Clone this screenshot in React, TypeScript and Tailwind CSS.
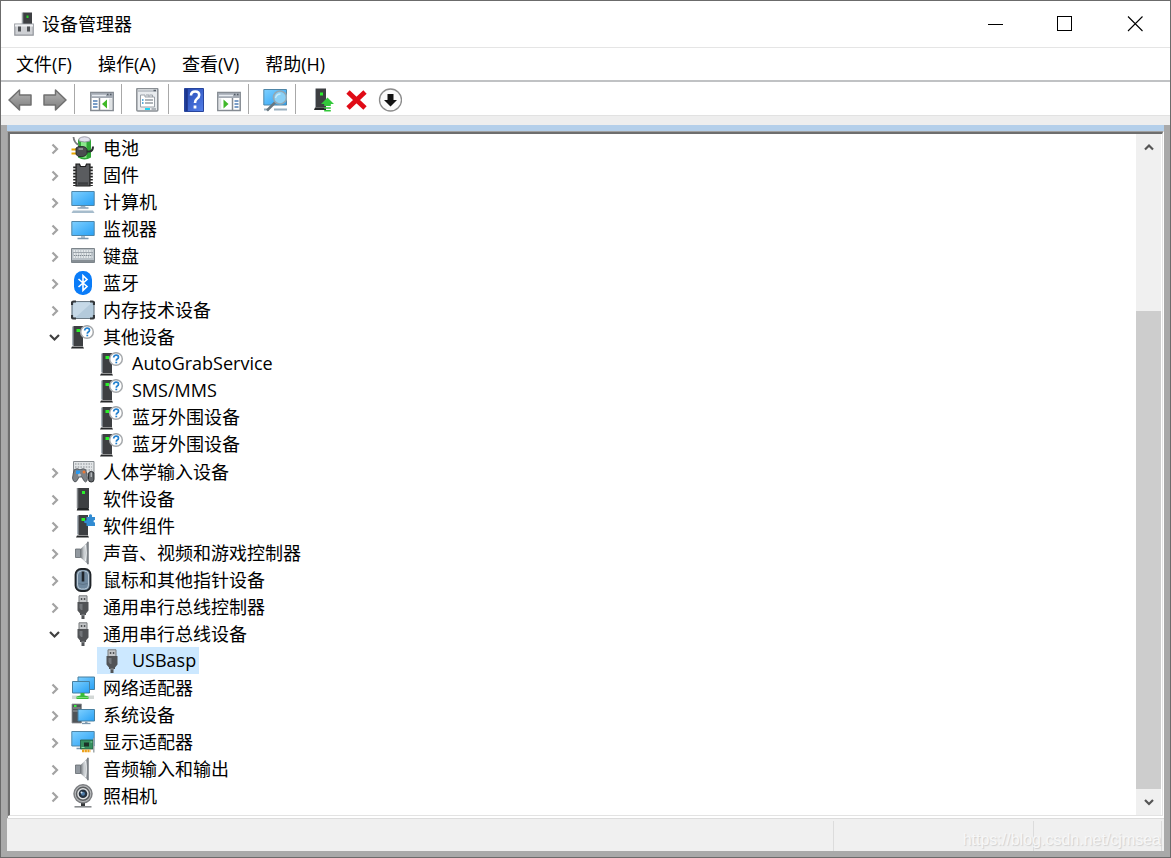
import { useState, type ReactNode } from 'react';
import clsx from 'clsx';

type IconName =
  | 'battery'
  | 'firmware'
  | 'computer'
  | 'monitor'
  | 'keyboard'
  | 'bluetooth'
  | 'memory'
  | 'unknown'
  | 'hid'
  | 'software'
  | 'component'
  | 'speaker'
  | 'mouse'
  | 'usb'
  | 'network'
  | 'system'
  | 'display'
  | 'camera';

interface DeviceNode {
  name: string;
  icon: IconName;
  open?: boolean;
  devices?: string[];
}

const nodes: DeviceNode[] = [
  { name: '电池', icon: 'battery' },
  { name: '固件', icon: 'firmware' },
  { name: '计算机', icon: 'computer' },
  { name: '监视器', icon: 'monitor' },
  { name: '键盘', icon: 'keyboard' },
  { name: '蓝牙', icon: 'bluetooth' },
  { name: '内存技术设备', icon: 'memory' },
  {
    name: '其他设备',
    icon: 'unknown',
    open: true,
    devices: ['AutoGrabService', 'SMS/MMS', '蓝牙外围设备', '蓝牙外围设备'],
  },
  { name: '人体学输入设备', icon: 'hid' },
  { name: '软件设备', icon: 'software' },
  { name: '软件组件', icon: 'component' },
  { name: '声音、视频和游戏控制器', icon: 'speaker' },
  { name: '鼠标和其他指针设备', icon: 'mouse' },
  { name: '通用串行总线控制器', icon: 'usb' },
  { name: '通用串行总线设备', icon: 'usb', open: true, devices: ['USBasp'] },
  { name: '网络适配器', icon: 'network' },
  { name: '系统设备', icon: 'system' },
  { name: '显示适配器', icon: 'display' },
  { name: '音频输入和输出', icon: 'speaker' },
  { name: '照相机', icon: 'camera' },
];

function Svg({ children }: { children: ReactNode }) {
  return (
    <svg viewBox="0 0 24 24" className="size-6 shrink-0" aria-hidden="true">
      <defs>
        <linearGradient id="screen" x1="0" y1="0" x2="1" y2="1">
          <stop offset="0" stopColor="#7fd0ff" />
          <stop offset="1" stopColor="#27a0f5" />
        </linearGradient>
        <linearGradient id="steel" x1="0" y1="0" x2="1" y2="0">
          <stop offset="0" stopColor="#6d7277" />
          <stop offset="0.5" stopColor="#d3d7da" />
          <stop offset="1" stopColor="#7b8085" />
        </linearGradient>
        <linearGradient id="arrow" x1="0" y1="0" x2="0" y2="1">
          <stop offset="0" stopColor="#b5b5b5" />
          <stop offset="1" stopColor="#7d7d7d" />
        </linearGradient>
        <linearGradient id="help" x1="0" y1="0" x2="1" y2="1">
          <stop offset="0" stopColor="#2447b0" />
          <stop offset="1" stopColor="#5480ea" />
        </linearGradient>
      </defs>
      {children}
    </svg>
  );
}

function Tower({ x }: { x: number }) {
  return (
    <g transform={`translate(${x} 0)`}>
      <path d="M1 1.500h2v19H1z" fill="#a9b2ba" />
      <path d="M2.500 1H12v20H2.500z" fill="#3d3f42" />
      <path d="M5.500 4H9v3H5.500z" fill="#2bf02b" />
      <path d="M1 21.500h11l1 2H0z" fill="#26282a" />
    </g>
  );
}

const drawings: Record<IconName, ReactNode> = {
  battery: (
    <>
      <path d="M7 3.500h13V21.500q-6.500 4-13 0z" fill="#2fa636" />
      <path d="M10 5h5.500v17q-3 0-5.500-1z" fill="#8ae88b" />
      <path d="M8 2.500q5.500-3.500 11 0v2.500q-5 2-11 0z" fill="#e2e2ee" stroke="#8a8a98" strokeWidth="0.800" />
      <path d="M2.500 1Q3 7 8 9" fill="none" stroke="#77797c" strokeWidth="1.800" />
      <path d="M.5 13.500H6M.5 17.500H6" stroke="#e9a800" strokeWidth="1.800" />
      <path d="M5 12l2.500-1.500H12q3 0 4 3v4q-1.500 3-4 3H7.500L5 18.500z" fill="#4b4d50" stroke="#202224" strokeWidth="0.800" />
      <path d="M7.500 13H12" stroke="#a6a8ab" strokeWidth="1.400" />
      <path d="M16 15.500h2.500q3.500-.5 3.500-5" fill="none" stroke="#2b2d30" strokeWidth="2" />
    </>
  ),
  firmware: (
    <>
      <path d="M3.500 3.500v19.500M20.500 3.500v19.500" stroke="#222" strokeWidth="2.600" strokeDasharray="1.700 1.400" />
      <path d="M5 1h3.500l1 2.500h5l1-2.500H19v22H5z" fill="#5a5c5f" stroke="#1c1c1c" strokeWidth="1.200" />
      <path d="M7 20.500h10" stroke="#3c3e40" strokeWidth="2.500" />
    </>
  ),
  computer: (
    <>
      <path d="M.8 1.500h22.400v14H.8z" fill="url(#screen)" stroke="#4f86a8" />
      <path d="M10 16h4l1 1.500H9z" fill="#9fb1c0" />
      <path d="M6.500 18h11" stroke="#7b97ad" strokeWidth="1.300" />
      <path d="M2 20.500h20l1.500 2.500H.5z" fill="#a6bccc" />
    </>
  ),
  monitor: (
    <>
      <path d="M.8 4.500h22.400v14H.8z" fill="url(#screen)" stroke="#4f86a8" />
      <path d="M10 19h4v2h-4z" fill="#b1c0cb" />
      <path d="M6.500 21.500h11" stroke="#7b97ad" strokeWidth="1.500" />
    </>
  ),
  keyboard: (
    <>
      <path d="M.5 4.500h23v14H.5z" fill="#b9c1c7" stroke="#7d858b" />
      <path d="M1 17h22" stroke="#868e94" strokeWidth="2" />
      <path d="M2.500 7h19M3 10h18M2.500 13h19" stroke="#f4f7f8" strokeWidth="1.700" strokeDasharray="1.600 1" />
      <path d="M2.500 8.500h19M3 11.500h18" stroke="#727c83" strokeWidth="0.800" strokeDasharray="1 1" />
    </>
  ),
  bluetooth: (
    <>
      <rect x="3" y="0" width="18" height="24" rx="8.500" fill="#0a7cf8" />
      <path d="M7.500 8l8.500 7.500-4 3.800V4.700l4 3.800L7.500 16" fill="none" stroke="#fff" strokeWidth="1.600" />
    </>
  ),
  memory: (
    <>
      <rect x="1" y="3.500" width="22" height="17" rx="2" fill="#b3cadb" stroke="#6d7c87" strokeWidth="1.200" />
      <path d="M3 4.500h18L5 19H2V6z" fill="#c6d9e7" />
      <path d="M1 7V5q0-1.500 1.500-1.500h2.500M19 3.500h2.500Q23 3.500 23 5v2M1 17v2q0 1.500 1.500 1.500h2.500M19 20.500h2.500q1.500 0 1.500-1.500v-2" fill="none" stroke="#34383b" strokeWidth="2.200" />
    </>
  ),
  unknown: (
    <>
      <Tower x={0} />
      <circle cx="16" cy="7" r="6.300" fill="#fff" stroke="#a6a9ac" strokeWidth="1.500" />
      <path d="M13.700 5.500q0-2.300 2.500-2.300 2.300 0 2.300 2 0 1.200-1.200 1.800-1 .7-1 1.700" fill="none" stroke="#2280cf" strokeWidth="1.700" />
      <path d="M15.400 9.700h1.800v1.600h-1.800z" fill="#2280cf" />
    </>
  ),
  hid: (
    <>
      <path d="M2.500 1.500h20.500V14H2.500z" fill="#e2e5e7" stroke="#878c90" />
      <path d="M4 4h17M4 7h17M4 10h17" stroke="#858b90" strokeWidth="1.200" strokeDasharray="1.500 1.200" />
      <path d="M3.500 9.500q3-1.500 5 0h1q3-1.500 5 0 2 5 2 9-.2 3-2 3.500-1.800-.5-3.500-5h-3q-2 5-4 5-2-.5-2.500-4 .5-5 2-8.500z" fill="#7d8287" stroke="#44484c" strokeWidth="0.800" />
      <path d="M5 10.500h4v3.500H5z" fill="#2998ef" />
      <circle cx="13" cy="12" r="1.500" fill="#ee7732" />
      <circle cx="8.500" cy="15" r="1.500" fill="#c1c5c8" />
      <rect x="17.500" y="11.500" width="5.500" height="10.500" rx="2.600" fill="#64686c" stroke="#2d3033" />
      <path d="M20.200 12.500v4.500" stroke="#d4d8db" />
    </>
  ),
  software: (
    <>
      <path d="M6.500 1H18v20H6.500z" fill="#3d3f42" />
      <path d="M6.500 1v20" stroke="#85898d" strokeWidth="1.500" />
      <path d="M11 4h3v3h-3z" fill="#2bf02b" />
      <path d="M6.500 21h11l.8 2.500H5.700z" fill="#222426" />
    </>
  ),
  component: (
    <>
      <Tower x={5} />
      <path d="M15.500 3h2.500Q17.500.2 19.500.2T21 3h3v3q-1.500 0-1.500 1.200T24 8.500V12h-8.500V9.200q-2.500 0-2.500-1.500t2.500-1.500z" fill="#318bd2" />
    </>
  ),
  speaker: (
    <>
      <path d="M4.500 8h5v8.500h-5z" fill="#9299a0" stroke="#62686d" strokeWidth="0.800" />
      <path d="M9.500 8L17 .8v22.400l-7.500-6.700z" fill="url(#steel)" />
      <path d="M16 .8h1.800v22.400H16z" fill="#7c8186" />
      <path d="M14.500 4q1.500 8 0 16" fill="none" stroke="#eceff1" strokeWidth="1.200" />
    </>
  ),
  mouse: (
    <>
      <rect x="4.500" y="1" width="15" height="22" rx="5.500" fill="#6f889e" stroke="#202428" strokeWidth="1.800" />
      <rect x="6.500" y="3" width="11" height="18" rx="4" fill="none" stroke="#b9c8d5" />
      <path d="M12 3.500v10" stroke="#1f252b" strokeWidth="2.600" />
      <path d="M7.500 15.500q4.500 2 9 0" fill="none" stroke="#5d7387" />
    </>
  ),
  usb: (
    <>
      <path d="M8 .8h8v7H8z" fill="#c4c6c8" stroke="#777a7d" />
      <path d="M9.800 3h1.500v2H9.800zM12.800 3h1.500v2h-1.500z" fill="#505356" />
      <path d="M6.500 7h11v8.500L15 18.500V20h-1.500v4h-3v-4H9v-1.500l-2.500-3z" fill="#515356" />
      <path d="M8.500 9h3v6h-1.500l-1.500-2z" fill="#73767a" />
      <path d="M10.500 20h3" stroke="#939699" />
    </>
  ),
  network: (
    <>
      <path d="M7 1h16.500v12.500H7z" fill="url(#screen)" stroke="#477f9f" />
      <path d="M1.500 5.500h17V17h-17z" fill="url(#screen)" stroke="#477f9f" />
      <path d="M1 19.500h22V23H1z" fill="#d3d8d6" />
      <path d="M9.500 17h4v2.500l4 1V23h-12v-2.500l4-1z" fill="#38bb38" />
      <path d="M6 21.500h11" stroke="#79dc75" />
    </>
  ),
  system: (
    <>
      <path d="M1 1h9.500v19H1z" fill="#505458" stroke="#929699" strokeWidth="0.800" />
      <path d="M2 5h7.500M2 8h7.500" stroke="#9ca0a4" />
      <path d="M3 2h2.500v2H3z" fill="#37ef41" />
      <path d="M7 6.500h16.500v11.500H7z" fill="url(#screen)" stroke="#477f9f" />
      <path d="M14 18.500h2.500v1.500H14z" fill="#91a4b3" />
      <path d="M11 20.500h8.500" stroke="#7b97ad" strokeWidth="1.300" />
    </>
  ),
  display: (
    <>
      <path d="M.8 1.500h22.400v14.500H.8z" fill="url(#screen)" stroke="#4f86a8" />
      <path d="M5.500 18.500h5" stroke="#7b97ad" strokeWidth="1.500" />
      <path d="M9.500 10h12.500v9H9.500z" fill="#35905f" stroke="#22583e" strokeWidth="0.800" />
      <path d="M13 12.500h5v4h-5z" fill="#1c3328" />
      <path d="M10.500 17.500h3M19.500 12h1.800" stroke="#8ad6a5" />
      <path d="M11 20.800h8.500" stroke="#eda21c" strokeWidth="2.800" strokeDasharray="2.200 .5" />
      <path d="M22.800 8v14.500" stroke="#9aa2a6" strokeWidth="1.400" />
    </>
  ),
  camera: (
    <>
      <path d="M10 19h4v3h-4z" fill="#37393b" />
      <path d="M3.500 22.800h17" stroke="#898c8f" strokeWidth="1.600" />
      <circle cx="12" cy="9.800" r="9" fill="#b9bbbd" stroke="#7b7d80" strokeWidth="1.500" />
      <circle cx="12" cy="9.800" r="6.500" fill="#e3e4e5" stroke="#5b5e61" strokeWidth="1.500" />
      <circle cx="12" cy="9.800" r="4.300" fill="#25313f" />
      <circle cx="12" cy="9.800" r="2" fill="#4d7ba8" />
      <circle cx="10.500" cy="8.500" r="1" fill="#d9e9f5" />
    </>
  ),
};

function Chevron({ open }: { open: boolean }) {
  return (
    <svg viewBox="0 0 16 16" className="size-4" fill="none" aria-hidden="true">
      {open ? (
        <path d="M3 6l4.500 4.500L12 6" stroke="#404040" strokeWidth="2.200" />
      ) : (
        <path d="M5.500 4.500L10 9l-4.500 4.500" stroke="#a3a3a3" strokeWidth="2.200" />
      )}
    </svg>
  );
}

function ScrollArrow({ down }: { down?: boolean }) {
  return (
    <svg viewBox="0 0 16 16" className="size-4" fill="none" aria-hidden="true">
      <path d={down ? 'M4 6l4 4 4-4' : 'M4 10.500l4-4 4 4'} stroke="#555" strokeWidth="2.200" />
    </svg>
  );
}

const tools: { className: string; items: { label: string; art: ReactNode }[] }[] = [
  {
    className: 'pl-[7px] pr-[7px] gap-[11px]',
    items: [
      {
        label: '后退',
        art: <path d="M1 12L11.500 2v5H23v10H11.500v5z" fill="url(#arrow)" stroke="#707070" strokeWidth="1.500" strokeLinejoin="round" />,
      },
      {
        label: '前进',
        art: <path d="M23 12L12.500 2v5H1v10h11.500v5z" fill="url(#arrow)" stroke="#707070" strokeWidth="1.500" strokeLinejoin="round" />,
      },
    ],
  },
  {
    className: 'pl-[15px] pr-[7px]',
    items: [
      {
        label: '显示/隐藏控制台树',
        art: (
          <>
            <path d="M.8 4.500h22.400v18H.8z" fill="#fff" stroke="#858b92" strokeWidth="1.500" />
            <path d="M1 5h22v5H1z" fill="#a4abb4" />
            <path d="M2 7.500h14" stroke="#e6ebf0" strokeWidth="1.500" />
            <path d="M17 6.500h1.500M20 6.500h1.500" stroke="#515a64" strokeWidth="1.500" />
            <path d="M9.500 10v12" stroke="#858b92" strokeWidth="1.500" />
            <path d="M3 13h4.500M3 16h4.500M3 19h4.500" stroke="#4f7eb5" strokeWidth="1.400" />
            <path d="M17 11.500v9L12 16z" fill="#3fb828" />
            <path d="M20.500 10.500v11.500" stroke="#dfe2e4" strokeWidth="3" />
          </>
        ),
      },
    ],
  },
  {
    className: 'pl-[14px] pr-[8px]',
    items: [
      {
        label: '属性',
        art: (
          <>
            <rect x=".8" y=".5" width="21" height="22.500" rx="1" fill="#e9ecef" stroke="#8b9095" strokeWidth="1.500" />
            <path d="M2 2h18.500v2H2z" fill="#c1c6cc" />
            <path d="M17.500 2.500H20" stroke="#59616b" strokeWidth="1.500" />
            <path d="M4.500 7H9v2h9.500v10h-14z" fill="#fff" stroke="#9ba1a8" />
            <path d="M10 7h3v2M13.500 7h3v2" fill="none" stroke="#9ba1a8" />
            <path d="M6 12h1.500M6 15h1.500" stroke="#2691d2" strokeWidth="1.500" />
            <path d="M9 12h8M9 15h8" stroke="#959ca3" strokeWidth="1.300" />
            <path d="M9 21h5" stroke="#20d4f4" strokeWidth="2" />
            <path d="M15.500 21H20" stroke="#aeb4ba" strokeWidth="2" />
          </>
        ),
      },
    ],
  },
  {
    className: 'pl-[13px] pr-[7px] gap-[11px]',
    items: [
      {
        label: '帮助',
        art: (
          <>
            <path d="M2.500.5h19v23h-19z" fill="url(#help)" stroke="#27459d" />
            <path d="M4.500 1v22" stroke="#1a338a" strokeWidth="2.500" />
            <path d="M9 7.500q0-4 4.200-4 4 0 4 3.500 0 2.200-2.200 3.700-2 1.500-2 4.300" fill="none" stroke="#fff" strokeWidth="2.600" />
            <path d="M11.600 17.500h2.800v3h-2.800z" fill="#fff" />
          </>
        ),
      },
      {
        label: '操作窗格',
        art: (
          <>
            <path d="M.8 4.500h22.400v18H.8z" fill="#fff" stroke="#858b92" strokeWidth="1.500" />
            <path d="M1 5h22v5H1z" fill="#a4abb4" />
            <path d="M2 7.500h14" stroke="#e6ebf0" strokeWidth="1.500" />
            <path d="M17 6.500h1.500M20 6.500h1.500" stroke="#515a64" strokeWidth="1.500" />
            <path d="M15.500 10v12" stroke="#858b92" strokeWidth="1.500" />
            <path d="M17.500 13h4M17.500 16h4M17.500 19h4" stroke="#4f7eb5" strokeWidth="1.400" />
            <path d="M6.500 11.500v9l5-4.500z" fill="#3fb828" />
            <path d="M3 10.500v11.500" stroke="#dfe2e4" strokeWidth="2.500" />
          </>
        ),
      },
    ],
  },
  {
    className: 'pl-[14px] pr-[8px]',
    items: [
      {
        label: '扫描检测硬件改动',
        art: (
          <>
            <path d="M.8 1.500h22.700v15.500H.8z" fill="url(#screen)" stroke="#4f86a8" />
            <path d="M1 21.500h5M11 21.500h13" stroke="#9ab0bf" strokeWidth="1.800" />
            <path d="M12.500 14L4 22.500" stroke="#69777f" strokeWidth="2.500" />
            <circle cx="17" cy="9.500" r="6.500" fill="#8bd0f5" stroke="#92a8b5" strokeWidth="1.700" />
            <path d="M12.500 10q1-4 5-4" fill="none" stroke="#c5eafb" strokeWidth="1.300" />
          </>
        ),
      },
    ],
  },
  {
    className: 'pl-[16px] gap-[9px]',
    items: [
      {
        label: '更新驱动程序',
        art: (
          <>
            <path d="M4 .5h10v19H4z" fill="#3d3f42" />
            <path d="M3.500.5v19" stroke="#a2a8ae" />
            <path d="M8 4.500h3v3H8z" fill="#2bf02b" />
            <path d="M3 19.500h11V22H2z" fill="#242628" />
            <path d="M15.500 9.500l6.500 6.500h-3.200v2h-6.600v-2H9z" fill="#32c83a" />
            <path d="M12.200 20h6.600M12.200 22.700h6.600" stroke="#32c83a" strokeWidth="1.600" />
          </>
        ),
      },
      {
        label: '卸载设备',
        art: <path d="M3 4l17 16M20 4L3 20" stroke="#e00b16" strokeWidth="4.800" />,
      },
      {
        label: '禁用设备',
        art: (
          <>
            <circle cx="12.500" cy="12" r="11" fill="#fafafa" stroke="#8c8c8c" strokeWidth="1.300" />
            <path d="M9.500 6h6v6h3.500l-6.500 6.500L6 12h3.500z" fill="#111" />
          </>
        ),
      },
    ],
  },
];

const menus = ['文件(F)', '操作(A)', '查看(V)', '帮助(H)'];

function TitleBar() {
  return (
    <header className="flex h-[47px] shrink-0 items-center border-b border-[#e5e5e5] bg-white pl-[13px]">
      <svg viewBox="0 0 20 24" className="h-6 w-5 shrink-0" aria-hidden="true">
        <path d="M9 .5h9v12H9z" fill="#3d3f42" />
        <path d="M8.500.5v12" stroke="#9ba1a6" strokeWidth="1.500" />
        <path d="M12.500 3.500h2v2.500h-2z" fill="#2bd02b" />
        <path d="M.8 12h18.400v11.200H.8z" fill="#ced0d4" stroke="#92959b" strokeWidth="1.200" />
        <path d="M1 13.500h18" stroke="#eff0f3" strokeWidth="2" />
        <path d="M4 14.500h3v5H4zM13 14.500h3v5h-3z" fill="#4f5256" />
      </svg>
      <h1 className="ml-2 flex-1 text-[18px] leading-6">设备管理器</h1>
      <button aria-label="最小化" className="grid h-full w-[70px] place-items-center">
        <svg viewBox="0 0 16 16" className="size-4" stroke="#000" fill="none" shapeRendering="crispEdges">
          <path d="M1 8.500h15" />
        </svg>
      </button>
      <button aria-label="最大化" className="grid h-full w-[70px] place-items-center">
        <svg viewBox="0 0 16 16" className="size-4" stroke="#000" fill="none" shapeRendering="crispEdges">
          <path d="M.5.5h14v14H.5z" />
        </svg>
      </button>
      <button aria-label="关闭" className="grid h-full w-[70px] place-items-center">
        <svg viewBox="0 0 16 16" className="size-4" stroke="#000" fill="none">
          <path d="M1 .500l14.500 14.500M15.500 .500L1 15" strokeWidth="1.100" />
        </svg>
      </button>
    </header>
  );
}

function Tree() {
  const [opened, setOpened] = useState(() => nodes.map((n) => !!n.open));
  const [selected, setSelected] = useState('USBasp');

  const toggle = (index: number) => {
    setOpened((prev) => prev.map((v, i) => (i === index ? !v : v)));
  };

  return (
    <ul className="min-w-0 flex-1 overflow-hidden text-[18px] leading-[27px]">
      {nodes.map((node, index) => (
        <li key={node.name}>
          <div className="flex h-[27px] items-center gap-2 pl-[37px]">
            <button aria-label={node.name} aria-expanded={opened[index]} onClick={() => toggle(index)}>
              <Chevron open={opened[index]} />
            </button>
            <Svg>{drawings[node.icon]}</Svg>
            <span className="whitespace-nowrap pt-0.5">{node.name}</span>
          </div>
          {opened[index] && node.devices && (
            <ul className="pl-[87px]">
              {node.devices.map((device, i) => (
                <li key={i} className="flex">
                  <button
                    onClick={() => setSelected(device)}
                    className={clsx(
                      'flex h-[27px] items-center gap-2 whitespace-nowrap px-[3px]',
                      selected === device && 'bg-[#cce8ff]'
                    )}
                  >
                    <Svg>{drawings[node.icon]}</Svg>
                    {device}
                  </button>
                </li>
              ))}
            </ul>
          )}
        </li>
      ))}
    </ul>
  );
}

export default function App() {
  return (
    <div className="flex h-screen flex-col border border-[#6b6b6b] bg-white font-['Open_Sans','Noto_Sans_CJK_SC',sans-serif] text-black">
      <TitleBar />

      {/* Menu */}
      <nav className="flex h-8 shrink-0 items-center pl-[2px]">
        {menus.map((menu) => (
          <button key={menu} className="px-[13px] text-[18px] leading-6">
            {menu}
          </button>
        ))}
      </nav>

      {/* Toolbar */}
      <div className="flex h-9 shrink-0 items-center border-b border-t-2 border-b-[#e2e2e2] border-t-[#c0c2c4] pt-px">
        {tools.map((group, index) => (
          <div
            key={index}
            className={clsx(
              'flex h-[30px] items-center pt-px',
              group.className,
              index < tools.length - 1 && 'border-r border-[#a8a8a8]'
            )}
          >
            {group.items.map((item) => (
              <button key={item.label} aria-label={item.label} title={item.label}>
                <Svg>{item.art}</Svg>
              </button>
            ))}
          </div>
        ))}
      </div>
      <div className="h-[9px] shrink-0 bg-[#eeeeee]" />

      {/* Body */}
      <div className="flex min-h-0 flex-1 flex-col bg-[#a9a9a9] px-[6px] pb-[6px]">
        <div className="h-[6px] shrink-0 bg-[#b4cfea]" />
        <div className="flex min-h-0 flex-1 border-x border-t border-l-[#a0a0a0] border-r-white border-t-[#a0a0a0] bg-white pb-[2px]">
          <main className="flex min-h-0 flex-1 border-b border-l-2 border-r border-t-2 border-b-[#e3e3e3] border-l-[#6e6e6e] border-r-[#e3e3e3] border-t-[#6e6e6e]">
            <Tree />
            <div className="mr-px flex w-[25px] flex-col bg-[#f0f0f0]">
              <button aria-label="向上滚动" className="grid h-[26px] place-items-center">
                <ScrollArrow />
              </button>
              <div className="flex flex-1 flex-col justify-end">
                <div className="h-[76%] bg-[#cdcdcd]" />
              </div>
              <button aria-label="向下滚动" className="grid h-[26px] place-items-center">
                <ScrollArrow down />
              </button>
            </div>
          </main>
        </div>

        {/* Status bar */}
        <footer className="flex h-[33px] shrink-0 border-t border-[#dcdcdc] bg-[#f0f0f0] pt-[2px]">
          <div className="flex-1 border-r border-[#dcdcdc]" />
          <div className="w-[200px] border-r border-[#dcdcdc]" />
          <div className="mr-[2px] flex w-[128px] items-center justify-end border-r border-[#dcdcdc]">
            <span className="whitespace-nowrap pt-2 font-['Liberation_Sans',Arial,sans-serif] text-[16px] leading-5 text-[#f7f7f7] [text-shadow:1px_1px_1px_#cfcfcf]">
              https://blog.csdn.net/cjmsea
            </span>
          </div>
        </footer>
      </div>
    </div>
  );
}
